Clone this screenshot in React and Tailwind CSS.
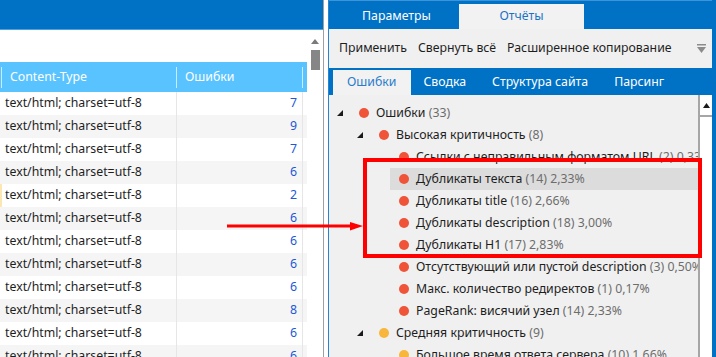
import React from "react";

const rows = ["7", "9", "7", "6", "2", "6", "6", "6", "6", "8", "6", "6"];

const tree = [
  { level: 0, open: true, color: "red", text: "Ошибки", count: "(33)" },
  { level: 1, open: true, color: "red", text: "Высокая критичность", count: "(8)" },
  { level: 2, color: "red", text: "Ссылки с неправильным форматом URL", count: "(2) 0,33%" },
  { level: 2, color: "red", text: "Дубликаты текста", count: "(14) 2,33%", sel: true },
  { level: 2, color: "red", text: "Дубликаты title", count: "(16) 2,66%" },
  { level: 2, color: "red", text: "Дубликаты description", count: "(18) 3,00%" },
  { level: 2, color: "red", text: "Дубликаты H1", count: "(17) 2,83%" },
  { level: 2, color: "red", text: "Отсутствующий или пустой description", count: "(3) 0,50%" },
  { level: 2, color: "red", text: "Макс. количество редиректов", count: "(1) 0,17%" },
  { level: 2, color: "red", text: "PageRank: висячий узел", count: "(14) 2,33%" },
  { level: 1, open: true, color: "yellow", text: "Средняя критичность", count: "(9)" },
  { level: 2, color: "yellow", text: "Большое время ответа сервера", count: "(10) 1,66%" },
];

const indent = { 0: "pl-[8px]", 1: "pl-[28px]", 2: "pl-[48px]" };

function Tri() {
  return (
    <svg width="6" height="6" viewBox="0 0 6 6" className="block">
      <polygon points="6,0 6,6 0,6" fill="#1a1a1a" />
    </svg>
  );
}

function Dot({ color }) {
  return (
    <span
      className={
        "inline-block w-[10px] h-[10px] rounded-full shrink-0 " +
        (color === "red" ? "bg-[#ef5438]" : "bg-[#f8b63c]")
      }
    />
  );
}

export default function App() {
  return (
    <div
      className="relative flex w-[716px] h-[357px] overflow-hidden bg-white text-[12.3px] text-[#1e1e1e]"
      style={{ fontFamily: '"Noto Sans", "Open Sans", sans-serif' }}
    >
      {/* Left panel */}
      <div className="w-[324px] h-full flex flex-col border-r border-[#a0a0a0] shrink-0">
        <div className="h-[30px] bg-[#0072c6] border-b border-[#4e9fdc] shrink-0" />
        <div className="flex flex-1 min-h-0">
          <div className="w-[307px] flex flex-col overflow-hidden">
            <div className="h-[32px] shrink-0" />
            <div className="h-[30px] flex items-center bg-[#59c3ff] text-white shrink-0">
              <span className="ml-px w-px h-[21px] bg-[#c9ecff]" />
              <div className="w-[174px] pl-[8px] leading-none">Content-Type</div>
              <span className="w-px h-[21px] bg-[#c9ecff]" />
              <div className="w-[125px] pl-[8px] leading-none">Ошибки</div>
              <span className="w-px h-[21px] bg-[#c9ecff]" />
            </div>
            {rows.map((n, i) => (
              <div
                key={i}
                className={
                  "flex h-[23px] shrink-0 items-center " +
                  (i % 2 === 1 ? "bg-[#f5f5f5]" : "bg-white") +
                  (i === 4 ? " border-l-2 border-[#fbe7b2]" : "")
                }
              >
                <div className={(i === 4 ? "w-[174px] pl-[3px]" : "w-[176px] pl-[5px]") + " h-full flex items-center whitespace-nowrap"}>
                  text/html; charset=utf-8
                </div>
                <div className="w-[126px] h-full flex items-center justify-end pr-[5px] border-l border-[#e6e6e6] text-[#2157d6]">
                  {n}
                </div>
                <div className="w-[5px] h-full border-l border-[#e6e6e6]" />
              </div>
            ))}
          </div>
          <div className="w-[16px] flex flex-col items-center bg-white">
            <svg width="8" height="5" viewBox="0 0 8 5" className="mt-[9px]">
              <polygon points="4,0 8,5 0,5" fill="#7a7a7a" />
            </svg>
            <div className="mt-[6px] w-[9px] h-[20px] bg-[#868686]" />
          </div>
        </div>
      </div>

      {/* Gap */}
      <div className="w-[4px] shrink-0" />

      {/* Right panel */}
      <div className="flex-1 h-full flex flex-col border-l border-[#2a82d2] border-r-4 border-r-[#0072c6] min-w-0">
        <div className="h-[29px] bg-[#0072c6] flex items-end pl-[5px] shrink-0 border-t border-[#3f93d8]">
          <div className="w-[125px] h-[25px] flex items-center justify-center text-white">Параметры</div>
          <div className="w-[125px] h-[25px] flex items-center justify-center bg-[#f2f2f2] text-[#1c72c4]">Отчёты</div>
        </div>
        <div className="h-[39px] bg-[#f0f0f0] flex items-center pl-[10px] gap-[11px] shrink-0 whitespace-nowrap">
          <span>Применить</span>
          <span>Свернуть всё</span>
          <span>Расширенное копирование</span>
          <svg width="9" height="9" viewBox="0 0 9 9" className="ml-auto mr-[6px]">
            <rect x="0" y="0" width="9" height="1.5" fill="#8c8c8c" />
            <polygon points="0,3 9,3 4.5,9" fill="#8c8c8c" />
          </svg>
        </div>
        <div className="h-[27px] bg-[#0072c6] flex items-end pl-[4px] shrink-0 whitespace-nowrap">
          <div className="h-[25px] px-[14px] flex items-center bg-[#f2f2f2] text-[#2a7ccc]">Ошибки</div>
          <div className="h-[25px] px-[13px] flex items-center text-white">Сводка</div>
          <div className="h-[25px] px-[13px] flex items-center text-white">Структура сайта</div>
          <div className="h-[25px] px-[13px] flex items-center text-white">Парсинг</div>
        </div>
        <div className="flex-1 flex min-h-0 bg-[#f0f0f0]">
          <div className="flex-1 min-w-0 overflow-hidden pt-[7px]">
            {tree.map((r, i) => (
              <div key={i} className={"flex items-center h-[22px] " + indent[r.level]}>
                <div className="w-[13px] shrink-0 flex items-center">{r.open ? <Tri /> : null}</div>
                <div
                  className={
                    "flex-1 h-full flex items-center pl-[9px] gap-[7px] whitespace-nowrap " +
                    (r.sel ? "bg-[#dcdcdc]" : "")
                  }
                >
                  <Dot color={r.color} />
                  <span>
                    {r.text} <span className="text-[#6d6d6d]">{r.count}</span>
                  </span>
                </div>
              </div>
            ))}
          </div>
          <div className="w-[14px] shrink-0 bg-white border-l-2 border-[#a6a6a6] flex flex-col">
            <div className="h-[22px] border-b-2 border-[#a6a6a6] flex items-center justify-center">
              <svg width="7" height="5" viewBox="0 0 7 5">
                <polygon points="3.5,0 7,5 0,5" fill="#1a1a1a" />
              </svg>
            </div>
          </div>
        </div>
      </div>

      {/* Annotation overlays */}
      <div className="absolute left-[363px] top-[158px] w-[339px] h-[100px] border-4 border-[#ff0000] pointer-events-none" />
      <svg className="absolute left-[227px] top-[220px] pointer-events-none" width="137" height="13" viewBox="0 0 137 13">
        <rect x="0" y="4.5" width="125" height="3" fill="#ff0000" />
        <polygon points="123,2 136,6 123,10.5" fill="#ff0000" />
      </svg>
    </div>
  );
}
